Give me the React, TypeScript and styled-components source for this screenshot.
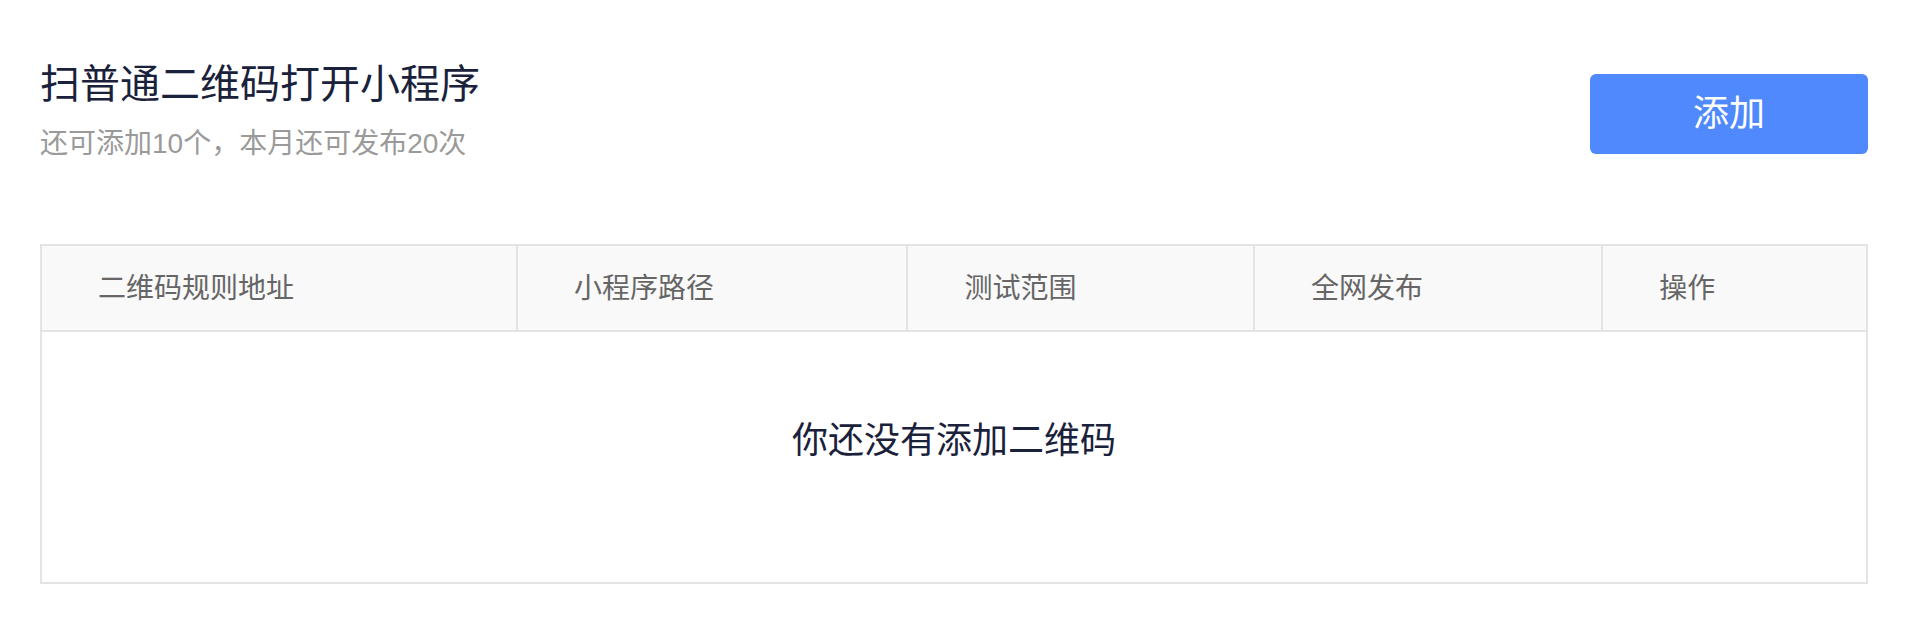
// ─────────────────────────────────────────────────────────────────────────────
// QR code rules page — heading with the remaining quota, an "add" button and
// the table of rules. Shows an empty message while there are no rules.
// ─────────────────────────────────────────────────────────────────────────────

import React from 'react';
import styled, { createGlobalStyle } from 'styled-components';

interface Column {
  title: string;
  width: string;
}

const COLUMNS: Column[] = [
  { title: '二维码规则地址', width: '26.1%' },
  { title: '小程序路径', width: '21.4%' },
  { title: '测试范围', width: '19%' },
  { title: '全网发布', width: '19.1%' },
  { title: '操作', width: '14.4%' },
];

const REMAINING_RULES = 10;
const REMAINING_RELEASES = 20;

// ── Styles ───────────────────────────────────────────────────────────────────

const GlobalStyle = createGlobalStyle`
  * {
    box-sizing: border-box;
  }

  body {
    margin: 0;
    background: #fff;
    color: #1a213b;
    font-family: 'Liberation Sans', 'Noto Sans CJK SC', sans-serif;
  }
`;

const Page = styled.main`
  padding: 54px 42px 36px 40px;
`;

const Header = styled.header`
  display: flex;
  align-items: center;
  justify-content: space-between;
  gap: 40px;
  margin-bottom: 70px;
`;

const Title = styled.h1`
  margin: 0;
  font-size: 40px;
  font-weight: 400;
  line-height: 60px;
`;

const Quota = styled.p`
  margin: 0;
  font-size: 28px;
  line-height: 60px;
  color: #9a9a9a;
`;

const AddButton = styled.button`
  flex: none;
  width: 278px;
  height: 80px;
  padding: 0 0 8px;
  border: 0;
  border-radius: 6px;
  background: #4f89fd;
  color: #fff;
  font-family: inherit;
  font-size: 36px;
  cursor: pointer;
`;

const Table = styled.table`
  width: 100%;
  table-layout: fixed;
  border: 2px solid #e4e4e4;
  border-collapse: separate;
  border-spacing: 0;
`;

const HeadCell = styled.th<{ $width: string }>`
  width: ${p => p.$width};
  height: 86px;
  padding: 0 0 4px 56px;
  border-right: 2px solid #e4e4e4;
  border-bottom: 2px solid #e4e4e4;
  background: #f9f9f9;
  color: #666;
  font-size: 28px;
  font-weight: 400;
  text-align: left;

  &:last-child {
    border-right: 0;
  }
`;

const EmptyCell = styled.td`
  height: 250px;
  padding: 0 0 40px;
  font-size: 36px;
  text-align: center;
`;

// ── Page ─────────────────────────────────────────────────────────────────────

const App: React.FC = () => (
  <>
    <GlobalStyle />
    <Page lang="zh-CN">
      <Header>
        <div>
          <Title>扫普通二维码打开小程序</Title>
          <Quota>
            {`还可添加${REMAINING_RULES}个，本月还可发布${REMAINING_RELEASES}次`}
          </Quota>
        </div>
        <AddButton type="button">添加</AddButton>
      </Header>
      <Table>
        <thead>
          <tr>
            {COLUMNS.map(({ title, width }) => (
              <HeadCell key={title} scope="col" $width={width}>
                {title}
              </HeadCell>
            ))}
          </tr>
        </thead>
        <tbody>
          <tr>
            <EmptyCell colSpan={COLUMNS.length}>你还没有添加二维码</EmptyCell>
          </tr>
        </tbody>
      </Table>
    </Page>
  </>
);

export default App;
